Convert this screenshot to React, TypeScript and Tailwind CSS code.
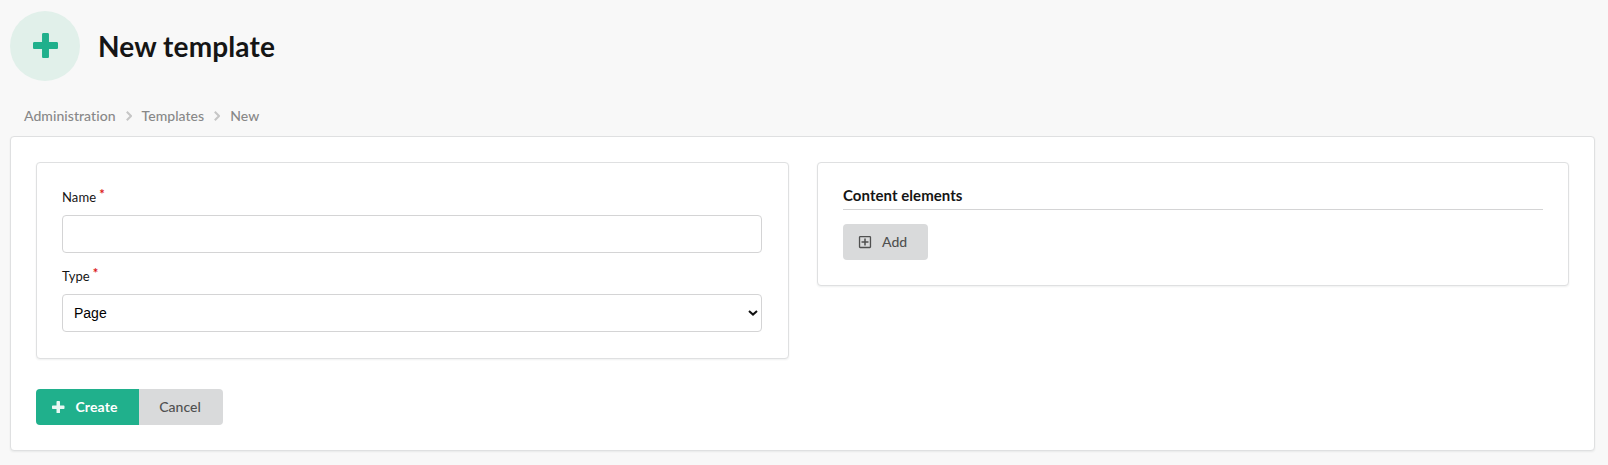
import { FaRegPlusSquare } from "react-icons/fa";

function Plus({ className }: { className: string }) {
  return (
    <svg viewBox="0 32 448 448" fill="currentColor" className={className}>
      <path d="M448 294.2v-76.4c0-13.3-10.7-24-24-24H286.2V56c0-13.3-10.7-24-24-24h-76.4c-13.3 0-24 10.7-24 24v137.8H24c-13.3 0-24 10.7-24 24v76.4c0 13.3 10.7 24 24 24h137.8V456c0 13.3 10.7 24 24 24h76.4c13.3 0 24-10.7 24-24V318.2H424c13.3 0 24-10.7 24-24z" />
    </svg>
  );
}

function Chevron() {
  return (
    <svg viewBox="0 0 6 10" className="mx-[10px] mt-px h-[10px] w-1.5" fill="none" stroke="#c6c6c6" strokeWidth="2">
      <path d="M.8.7 5 5 .8 9.3" />
    </svg>
  );
}

function Label({ text }: { text: string }) {
  return (
    <label className="flex h-[19px] items-center text-[13px] leading-[19px] tracking-[0.1px] text-[#151515]">
      {text}
      <span className="relative -top-[3px] ml-[3px] font-bold text-[#db1818]">*</span>
    </label>
  );
}

const card = "rounded border border-[#dfe0e1] bg-white p-[25px] shadow-[0_1px_2px_0_rgba(34,36,38,0.07)]";

export default function App() {
  return (
    <div className="flex h-[465px] flex-col bg-[#f8f8f8] pl-[10px] pr-[13px] pt-[11px] font-['Lato',sans-serif] text-sm [font-variant-ligatures:none]">
      <header className="flex h-[70px] items-center">
        <div className="flex size-[70px] items-center justify-center rounded-full bg-[#e1f0ea] text-[#20b08c]">
          <Plus className="mb-px size-[25px]" />
        </div>
        <h1 className="ml-[18px] text-[28px] font-bold leading-9 tracking-[0.13px] text-[#151515]">New template</h1>
      </header>
      <nav className="mt-[25px] flex h-[19px] items-center pl-[14px] font-medium tracking-[0.05px] text-[#888]">
        <span>Administration</span>
        <Chevron />
        <span>Templates</span>
        <Chevron />
        <span>New</span>
      </nav>
      <main className={`mt-[11px] h-[315px] shrink-0 ${card}`}>
        <div className="grid grid-cols-[753px_752px] items-start gap-7">
          <section className={`h-[197px] ${card}`}>
            <Label text="Name" />
            <input className="mt-2 block h-[38px] w-[700px] rounded border border-[#d4d4d5] bg-white" />
            <div className="mt-[14px]"><Label text="Type" /></div>
            <div className="mt-2 flex h-[38px] w-[700px] items-center justify-between rounded border border-[#d4d4d5] pl-[11px] pr-[3px] font-['Liberation_Sans',sans-serif] text-black">
              <span>Page</span>
              <svg viewBox="0 0 10 6" className="h-1.5 w-2.5" fill="none" stroke="#111" strokeWidth="2">
                <path d="M1 1 5 4.6 9 1" />
              </svg>
            </div>
          </section>
          <section className={`h-[124px] ${card}`}>
            <h2 className="h-[22px] border-b border-[#d4d4d5] text-[15px] font-bold leading-[15px] tracking-[0.05px] text-[#151515]">Content elements</h2>
            <button className="mt-[14px] flex h-9 w-[85px] items-center rounded bg-[#d9dadb] pl-[15px] font-medium text-[#505050]">
              <FaRegPlusSquare size={14} />
              <span className="ml-[10px]">Add</span>
            </button>
          </section>
        </div>
        <div className="mt-[30px] flex h-9">
          <button className="flex w-[103px] items-center rounded-l bg-[#20b08c] pl-4 font-bold text-white">
            <Plus className="size-[12.5px] opacity-90" />
            <span className="ml-[11px] tracking-[0.1px]">Create</span>
          </button>
          <button className="w-[84px] rounded-r bg-[#d9dadb] pr-0.5 font-medium text-[#505050]">Cancel</button>
        </div>
      </main>
    </div>
  );
}
